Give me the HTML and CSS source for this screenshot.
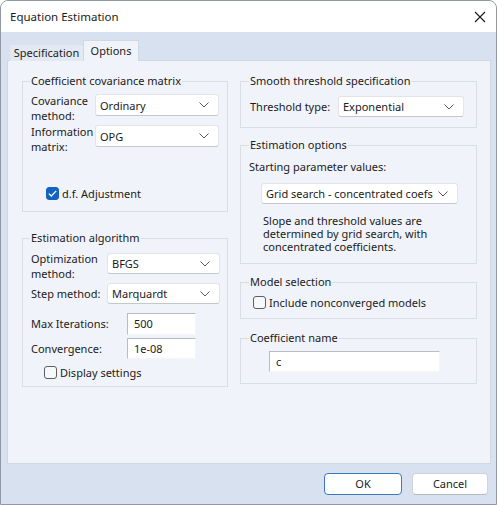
FILE: index.html
```html
<!DOCTYPE html>
<html>
<head>
<meta charset="utf-8">
<link rel="stylesheet" href="styles.css">
</head>
<body>
<div class="window">
  <div class="titlebar">
    <span class="title">Equation Estimation</span>
    <svg class="close" width="12" height="12" viewBox="0 0 12 12"><path d="M1 1L11 11M11 1L1 11" stroke="#1a1a1a" stroke-width="1.1" fill="none"/></svg>
  </div>
  <div class="client">
    <div class="tabs">
      <div class="tab">Specification</div>
      <div class="tab active">Options</div>
    </div>
    <div class="panel">
      <div class="col col-left">
        <fieldset class="grp grp-cov">
          <legend>Coefficient covariance matrix</legend>
          <div class="row row2">
            <div class="lbl lbl-cov">Covariance<br>method:</div>
            <div class="sel sel-cov"><span>Ordinary</span><svg width="10" height="6" viewBox="0 0 10 6"><path d="M0.5 0.5L5 5L9.5 0.5" stroke="#5a5a5a" fill="none"/></svg></div>
          </div>
          <div class="row row2 row-gap1">
            <div class="lbl lbl-cov">Information<br>matrix:</div>
            <div class="sel sel-cov"><span>OPG</span><svg width="10" height="6" viewBox="0 0 10 6"><path d="M0.5 0.5L5 5L9.5 0.5" stroke="#5a5a5a" fill="none"/></svg></div>
          </div>
          <div class="chkrow chk-df">
            <span class="chk on"><svg width="9" height="7" viewBox="0 0 9 7"><path d="M0.8 3.6L3.3 6L8.2 0.9" stroke="#fff" stroke-width="1.3" fill="none"/></svg></span>
            <span>d.f. Adjustment</span>
          </div>
        </fieldset>
        <fieldset class="grp grp-alg">
          <legend>Estimation algorithm</legend>
          <div class="row row2">
            <div class="lbl lbl-alg">Optimization<br>method:</div>
            <div class="sel sel-alg sel-opt"><span>BFGS</span><svg width="10" height="6" viewBox="0 0 10 6"><path d="M0.5 0.5L5 5L9.5 0.5" stroke="#5a5a5a" fill="none"/></svg></div>
          </div>
          <div class="row row1 row-step">
            <div class="lbl lbl-alg">Step method:</div>
            <div class="sel sel-alg"><span>Marquardt</span><svg width="10" height="6" viewBox="0 0 10 6"><path d="M0.5 0.5L5 5L9.5 0.5" stroke="#5a5a5a" fill="none"/></svg></div>
          </div>
          <div class="row row-edit row-max">
            <div class="lbl lbl-num">Max Iterations:</div>
            <div class="edit edit-num">500</div>
          </div>
          <div class="row row-edit row-conv">
            <div class="lbl lbl-num">Convergence:</div>
            <div class="edit edit-num">1e-08</div>
          </div>
          <div class="chkrow chk-disp">
            <span class="chk"></span>
            <span>Display settings</span>
          </div>
        </fieldset>
      </div>
      <div class="col col-right">
        <fieldset class="grp grp-smooth">
          <legend>Smooth threshold specification</legend>
          <div class="row row1">
            <div class="lbl lbl-thr">Threshold type:</div>
            <div class="sel sel-thr"><span>Exponential</span><svg width="10" height="6" viewBox="0 0 10 6"><path d="M0.5 0.5L5 5L9.5 0.5" stroke="#5a5a5a" fill="none"/></svg></div>
          </div>
        </fieldset>
        <fieldset class="grp grp-est">
          <legend>Estimation options</legend>
          <div class="text-line">Starting parameter values:</div>
          <div class="sel sel-start"><span>Grid search - concentrated coefs</span><svg width="10" height="6" viewBox="0 0 10 6"><path d="M0.5 0.5L5 5L9.5 0.5" stroke="#5a5a5a" fill="none"/></svg></div>
          <div class="desc">Slope and threshold values are<br>determined by grid search, with<br>concentrated coefficients.</div>
        </fieldset>
        <fieldset class="grp grp-model">
          <legend>Model selection</legend>
          <div class="chkrow chk-model">
            <span class="chk"></span>
            <span>Include nonconverged models</span>
          </div>
        </fieldset>
        <fieldset class="grp grp-coef">
          <legend>Coefficient name</legend>
          <div class="edit edit-coef">c</div>
        </fieldset>
      </div>
    </div>
    <div class="buttons">
      <div class="btn btn-ok">OK</div>
      <div class="btn btn-cancel">Cancel</div>
    </div>
  </div>
</div>
</body>
</html>
```
FILE: styles.css
```css
* { box-sizing: border-box; }
html, body { margin: 0; padding: 0; }
body {
  width: 497px;
  height: 505px;
  overflow: hidden;
  background: #ffffff;
  font-family: "Noto Sans", "Open Sans", sans-serif;
  font-size: 11px;
  color: #1b1b1b;
}
.window {
  width: 497px;
  height: 505px;
  border: 1px solid #8f98a3;
  border-radius: 8px 8px 0 0;
  display: flex;
  flex-direction: column;
  overflow: hidden;
  background: #d7e1ef;
}
.titlebar {
  height: 31px;
  flex: none;
  background: #ffffff;
  display: flex;
  align-items: center;
  justify-content: space-between;
  padding: 0 10px 0 9px;
}
.title { font-size: 11.5px; line-height: 16px; }
.close { display: block; }
.client {
  flex: 1;
  display: flex;
  flex-direction: column;
  padding: 8px 0 0 6px;
}
.tabs {
  display: flex;
  align-items: flex-end;
  height: 21px;
  padding-left: 3px;
  margin-bottom: -1px;
  position: relative;
  z-index: 1;
}
.tab {
  width: 73px;
  height: 16px;
  line-height: 15px;
  text-align: center;
  background: #e3e9f3;
}
.tab.active {
  width: 56px;
  height: 21px;
  line-height: 20px;
  background: #f0f3f9;
  border: 1px solid #d2d8e2;
  border-bottom: none;
}
.panel {
  width: 484px;
  height: 404px;
  flex: none;
  background: #f0f3f9;
  border: 1px solid #d2d8e2;
  display: flex;
  gap: 12px;
  padding: 12px 0 0 14px;
}
.col { display: flex; flex-direction: column; }
.col-left { width: 206px; }
.col-right { width: 237px; }
.grp {
  margin: 0;
  min-width: 0;
  border: 1px solid #d9dde4;
  padding: 0 7px;
}
.grp legend {
  padding: 0 1px;
  line-height: 16px;
  height: 16px;
}
.grp-cov { padding-top: 4px; padding-bottom: 10px; }
.grp-alg { margin-top: 18px; padding-top: 5px; padding-bottom: 6px; }
.grp-smooth { padding: 7px 8px 10px 8px; }
.grp-est { margin-top: 9px; padding: 6px 8px 10px 8px; }
.grp-model { margin-top: 10px; padding: 4px 8px 8px 8px; }
.grp-coef { margin-top: 11px; padding: 5px 8px 11px 8px; }

.row { display: flex; align-items: flex-start; padding-left: 1px; }
.row2 { height: 30px; }
.row2 .lbl { line-height: 15px; }
.row-gap1 { margin-top: 1px; }
.row1 { height: 21px; }
.row1 .lbl { line-height: 21px; }
.row-step { margin-top: 2px; }
.row-edit { height: 22px; }
.row-edit .lbl { line-height: 22px; }
.row-max { margin-top: 9px; }
.row-conv { margin-top: 3px; height: 21px; }
.row-conv .lbl { line-height: 21px; }
.row-conv .edit { height: 21px; }

.lbl { flex: none; white-space: nowrap; }
.lbl-cov { width: 64px; }
.lbl-alg { width: 76px; }
.lbl-num { width: 96px; }
.lbl-thr { width: 88px; }

.sel {
  display: flex;
  align-items: center;
  justify-content: space-between;
  background: #ffffff;
  border: 1px solid #e2e4e8;
  border-bottom-color: #c4c7cc;
  border-radius: 3px;
  padding: 0 9px 0 4px;
  height: 22px;
  white-space: nowrap;
}
.sel svg { flex: none; display: block; }
.sel-cov { width: 124px; margin-top: 1px; }
.sel-alg { width: 114px; height: 21px; }
.sel-opt { margin-top: 2px; }
.sel-thr { width: 126px; height: 21px; }
.sel-start { width: 197px; height: 21px; margin: 8px 0 0 12px; }

.edit {
  background: #ffffff;
  border-top: 1px solid #b9bcc2;
  border-left: 1px solid #b9bcc2;
  border-right: 1px solid #f4f5f7;
  border-bottom: 1px solid #f4f5f7;
  padding-left: 6px;
  white-space: nowrap;
}
.edit-num { width: 69px; height: 22px; line-height: 20px; }
.edit-coef { width: 171px; height: 21px; line-height: 19px; margin-left: 20px; }

.chkrow { display: flex; align-items: center; height: 16px; gap: 3px; }
.chk-df { margin-top: 31px; padding-left: 16px; }
.chk-disp { margin-top: 5px; padding-left: 14px; }
.chk-model { padding-left: 4px; }
.chk {
  width: 13px;
  height: 13px;
  flex: none;
  border: 1px solid #5e5e5e;
  border-radius: 3px;
  background: #f7f8fa;
  display: flex;
  align-items: center;
  justify-content: center;
}
.chk.on { background: #1463c2; border-color: #1463c2; }
.chk svg { display: block; }

.text-line { line-height: 16px; }
.desc { margin: 10px 0 0 14px; line-height: 13px; }

.buttons {
  display: flex;
  justify-content: flex-end;
  gap: 10px;
  margin-top: 9px;
  padding-right: 3px;
  width: 484px;
}
.btn {
  height: 22px;
  line-height: 20px;
  text-align: center;
  background: #ffffff;
  border: 1px solid #d0d3d8;
  border-bottom-color: #b8bbc0;
  border-radius: 4px;
}
.btn-ok { width: 78px; border-color: #3b79c6; }
.btn-cancel { width: 76px; }
```
